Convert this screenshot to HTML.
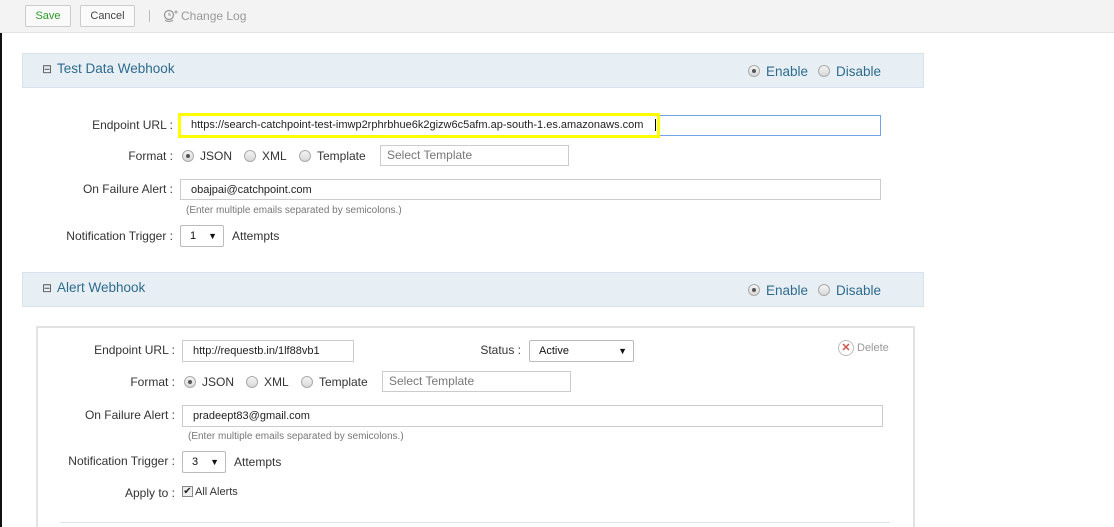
<!DOCTYPE html>
<html style="height:527px;overflow:hidden"><head><meta charset="utf-8"><style>
*{box-sizing:border-box;margin:0;padding:0}
body{width:1114px;height:527px;overflow:hidden;background:#fff;font-family:"Liberation Sans",Arial,sans-serif;font-size:12px;color:#333;position:relative}
.a{position:absolute;white-space:nowrap}
.lbl{position:absolute;text-align:right;font-size:12px;color:#333;line-height:14px}
.inp{position:absolute;border:1px solid #ccc;background:#fff;font-size:11px;line-height:20px;padding-left:10px;color:#222}
.rad{position:absolute;width:12px;height:12px;border-radius:50%;border:1px solid #aaa;background:linear-gradient(#f4f4f4,#d8d8d8)}
.rad.on::after{content:"";position:absolute;left:3px;top:3px;width:4px;height:4px;border-radius:50%;background:#555}
.hdr{position:absolute;left:22px;width:902px;height:35px;background:#e7eff5;border:1px solid #d5e3ee;color:#2f6b8c;font-size:13.5px}
.sel{position:absolute;border:1px solid #bbb;border-radius:2px;background:#fff;font-size:11px;line-height:20px;padding-left:9px;color:#111}
.sel b{position:absolute;right:6px;top:0;font-size:9px;font-weight:normal}
.t{font-size:12px;line-height:14px}
.en{color:#2f6b8c;font-size:13.5px}
</style></head><body>
<div class="a" style="left:0;top:0;width:1114px;height:33px;background:#f3f3f3;border-bottom:1px solid #e2e2e2"></div>
<div class="a" style="left:0;top:33px;width:2px;height:494px;background:#111"></div>
<div class="a" style="left:25px;top:5px;width:46px;height:22px;border:1px solid #ccc;border-radius:2px;background:#fafafa;color:#2a9a2a;font-size:11px;line-height:20px;text-align:center">Save</div>
<div class="a" style="left:80px;top:5px;width:55px;height:22px;border:1px solid #ccc;border-radius:2px;background:#fafafa;color:#444;font-size:11px;line-height:20px;text-align:center">Cancel</div>
<div class="a" style="left:149px;top:10px;width:1px;height:12px;background:#bbb"></div>
<svg class="a" style="left:163px;top:9px" width="16" height="14" viewBox="0 0 16 14"><circle cx="6" cy="6" r="4.5" fill="none" stroke="#999" stroke-width="1.3"/><path d="M6 3.5V6h2" stroke="#999" fill="none"/><path d="M2 11c2 2 6 2 8 0" stroke="#999" fill="none"/><circle cx="13" cy="3" r="1.5" fill="#aaa"/></svg>
<div class="a" style="left:181px;top:9px;color:#999;font-size:12px">Change Log</div>

<div class="hdr" style="top:53px"><span class="a" style="left:19px;top:8px;font-size:12px;color:#555">⊟</span><span class="a" style="left:34px;top:7px">Test Data Webhook</span></div>
<div class="rad on" style="left:748px;top:65px"></div><div class="a en" style="left:766px;top:64px">Enable</div>
<div class="rad" style="left:818px;top:65px"></div><div class="a en" style="left:836px;top:64px">Disable</div>

<div class="lbl" style="left:40px;width:133px;top:118px">Endpoint URL :</div>
<div class="inp" style="left:180px;top:115px;width:701px;height:21px;border-color:#6fa4e8"></div>
<div class="a" style="left:178px;top:113px;width:482px;height:25px;border:3px solid #ffff00"></div>
<div class="a" style="left:191px;top:119px;font-size:11px;color:#222">https://search-catchpoint-test-imwp2rphrbhue6k2gizw6c5afm.ap-south-1.es.amazonaws.com</div>
<div class="a" style="left:655px;top:119px;width:1px;height:12px;background:#000"></div>

<div class="lbl" style="left:40px;width:133px;top:149px">Format :</div>
<div class="rad on" style="left:182px;top:150px"></div><div class="a t" style="left:200px;top:149px">JSON</div>
<div class="rad" style="left:244px;top:150px"></div><div class="a t" style="left:262px;top:149px">XML</div>
<div class="rad" style="left:299px;top:150px"></div><div class="a t" style="left:317px;top:149px">Template</div>
<div class="inp" style="left:380px;top:145px;width:189px;height:21px;color:#777;font-size:12px;padding-left:6px;line-height:18px">Select Template</div>

<div class="lbl" style="left:40px;width:133px;top:182px">On Failure Alert :</div>
<div class="inp" style="left:180px;top:179px;width:701px;height:21px">obajpai@catchpoint.com</div>
<div class="a" style="left:186px;top:205px;font-size:10px;color:#777">(Enter multiple emails separated by semicolons.)</div>

<div class="lbl" style="left:40px;width:133px;top:229px">Notification Trigger :</div>
<div class="sel" style="left:180px;top:225px;width:44px;height:22px">1<b>▼</b></div>
<div class="a t" style="left:232px;top:229px">Attempts</div>

<div class="hdr" style="top:272px"><span class="a" style="left:19px;top:8px;font-size:12px;color:#555">⊟</span><span class="a" style="left:34px;top:7px">Alert Webhook</span></div>
<div class="rad on" style="left:748px;top:284px"></div><div class="a en" style="left:766px;top:283px">Enable</div>
<div class="rad" style="left:818px;top:284px"></div><div class="a en" style="left:836px;top:283px">Disable</div>

<div class="a" style="left:36px;top:326px;width:879px;height:201px;border:2px solid #e2e2e2;border-bottom:none"></div>
<div class="lbl" style="left:40px;width:135px;top:343px">Endpoint URL :</div>
<div class="inp" style="left:182px;top:340px;width:172px;height:22px">http://requestb.in/1lf88vb1</div>
<div class="lbl" style="left:440px;width:81px;top:343px">Status :</div>
<div class="sel" style="left:529px;top:340px;width:105px;height:22px">Active<b>▼</b></div>
<div class="a" style="left:838px;top:340px;width:16px;height:16px;border:1px solid #bbb;border-radius:50%;color:#d0574d;font-size:11px;line-height:14px;text-align:center;font-weight:bold">✕</div>
<div class="a" style="left:857px;top:342px;color:#999;font-size:11px">Delete</div>

<div class="lbl" style="left:40px;width:135px;top:375px">Format :</div>
<div class="rad on" style="left:184px;top:376px"></div><div class="a t" style="left:202px;top:375px">JSON</div>
<div class="rad" style="left:246px;top:376px"></div><div class="a t" style="left:264px;top:375px">XML</div>
<div class="rad" style="left:301px;top:376px"></div><div class="a t" style="left:319px;top:375px">Template</div>
<div class="inp" style="left:382px;top:371px;width:189px;height:21px;color:#777;font-size:12px;padding-left:6px;line-height:18px">Select Template</div>

<div class="lbl" style="left:40px;width:135px;top:408px">On Failure Alert :</div>
<div class="inp" style="left:182px;top:405px;width:701px;height:22px">pradeept83@gmail.com</div>
<div class="a" style="left:188px;top:431px;font-size:10px;color:#777">(Enter multiple emails separated by semicolons.)</div>

<div class="lbl" style="left:40px;width:135px;top:454px">Notification Trigger :</div>
<div class="sel" style="left:182px;top:451px;width:44px;height:22px">3<b>▼</b></div>
<div class="a t" style="left:234px;top:455px">Attempts</div>

<div class="lbl" style="left:40px;width:135px;top:486px">Apply to :</div>
<div class="a" style="left:182px;top:486px;width:11px;height:11px;border:1px solid #888;background:#eee;font-size:10px;line-height:9px;text-align:center;color:#222">✔</div>
<div class="a" style="left:195px;top:486px;font-size:11px">All Alerts</div>
<div class="a" style="left:60px;top:522px;width:830px;height:1px;background:#e2e2e2"></div>
</body></html>
